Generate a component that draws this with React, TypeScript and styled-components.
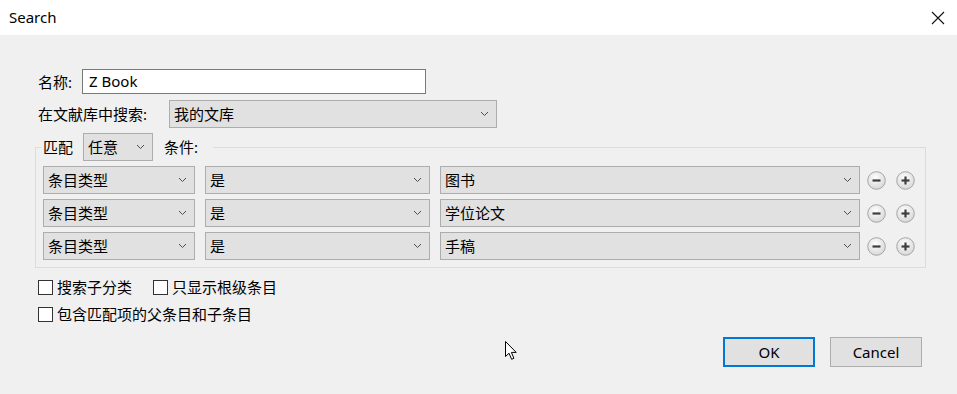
import React from 'react';
import styled, { createGlobalStyle } from 'styled-components';

const GlobalStyle = createGlobalStyle`
  html, body {
    margin: 0;
    padding: 0;
    background: #f0f0f0;
  }
  body {
    font-family: 'Segoe UI', 'Noto Sans', 'Noto Sans CJK SC', sans-serif;
    font-size: 15px;
    color: #000;
  }
`;

const CONDITIONS = [
  { field: '条目类型', op: '是', value: '图书' },
  { field: '条目类型', op: '是', value: '学位论文' },
  { field: '条目类型', op: '是', value: '手稿' },
];

function Chevron() {
  return (
    <StChevron width="9" height="6" viewBox="0 0 9 6">
      <path d="M1 1 L4.5 4.5 L8 1" fill="none" stroke="#4d4d4d" strokeWidth="1" />
    </StChevron>
  );
}

function Select({ text, width, height = 28 }: { text: string; width: number; height?: number }) {
  return (
    <StSelect $width={width} $height={height}>
      <span>{text}</span>
      <Chevron />
    </StSelect>
  );
}

function RoundButton({ kind }: { kind: 'minus' | 'plus' }) {
  const id = `grad-${kind}`;
  return (
    <StRound width="19" height="19" viewBox="0 0 19 19">
      <defs>
        <radialGradient id={id} cx="45%" cy="35%" r="70%">
          <stop offset="0%" stopColor="#ffffff" />
          <stop offset="100%" stopColor="#d4d4d4" />
        </radialGradient>
      </defs>
      <circle cx="9.5" cy="9.5" r="8.8" fill={`url(#${id})`} stroke="#a6a6a6" strokeWidth="1" />
      <path d="M5.5 9.5 H13.5" stroke="#3e3e3e" strokeWidth="2.2" />
      {kind === 'plus' && <path d="M9.5 5.5 V13.5" stroke="#3e3e3e" strokeWidth="2.2" />}
    </StRound>
  );
}

function Checkbox({ label }: { label: string }) {
  return (
    <StCheck>
      <StBox />
      <span>{label}</span>
    </StCheck>
  );
}

export default function App() {
  return (
    <StWindow>
      <GlobalStyle />
      <StTitleBar>
        <StTitle>Search</StTitle>
        <StClose width="14" height="14" viewBox="0 0 14 14">
          <path d="M1 1 L13 13 M13 1 L1 13" stroke="#111" strokeWidth="1.1" />
        </StClose>
      </StTitleBar>

      <StBody>
        <StFieldRow>
          <StLabel $width={44}>名称:</StLabel>
          <StInput>Z Book</StInput>
        </StFieldRow>
        <StFieldRow $gap={6}>
          <StLabel $width={131}>在文献库中搜索:</StLabel>
          <Select text="我的文库" width={328} />
        </StFieldRow>

        <StFieldset>
          <StLegend>
            <span>匹配</span>
            <Select text="任意" width={70} />
            <span>条件:</span>
          </StLegend>
          <StConditions>
            {CONDITIONS.map((c, i) => (
              <StCondRow key={i}>
                <Select text={c.field} width={152} />
                <Select text={c.op} width={225} />
                <Select text={c.value} width={420} />
                <StRoundGroup>
                  <RoundButton kind="minus" />
                  <RoundButton kind="plus" />
                </StRoundGroup>
              </StCondRow>
            ))}
          </StConditions>
        </StFieldset>

        <StChecks>
          <StCheckRow>
            <Checkbox label="搜索子分类" />
            <Checkbox label="只显示根级条目" />
          </StCheckRow>
          <StCheckRow>
            <Checkbox label="包含匹配项的父条目和子条目" />
          </StCheckRow>
        </StChecks>

        <StButtons>
          <StButton $primary>OK</StButton>
          <StButton>Cancel</StButton>
        </StButtons>
      </StBody>

      <StCursor width="13" height="20" viewBox="0 0 13 20">
        <path d="M0.5 0.5 L0.5 15.5 L4 12.2 L6.6 18.3 L8.9 17.3 L6.4 11.4 L11.2 11.4 Z" fill="#fff" stroke="#000" strokeWidth="1" strokeLinejoin="round" />
      </StCursor>
    </StWindow>
  );
}

const StWindow = styled.div`
  position: relative;
  width: 957px;
  height: 394px;
  background: #f0f0f0;
  overflow: hidden;
`;

const StTitleBar = styled.div`
  height: 35px;
  background: #fff;
  display: flex;
  align-items: center;
  justify-content: space-between;
  padding: 0 12px 0 9px;
  box-sizing: border-box;
`;

const StTitle = styled.div`
  font-size: 15px;
  line-height: 20px;
  margin-top: -1px;
`;

const StClose = styled.svg`
  display: block;
`;

const StBody = styled.div`
  display: flex;
  flex-direction: column;
  padding: 34px 31px 0 35px;
`;

const StFieldRow = styled.div<{ $gap?: number }>`
  display: flex;
  align-items: center;
  padding-left: 3px;
  margin-top: ${(p) => p.$gap ?? 0}px;
`;

const StLabel = styled.div<{ $width: number }>`
  width: ${(p) => p.$width}px;
  flex: none;
  line-height: 20px;
`;

const StInput = styled.div`
  width: 344px;
  height: 25px;
  box-sizing: border-box;
  border: 1px solid #7a7a7a;
  background: #fff;
  padding: 0 6px;
  line-height: 22px;
  font-size: 15px;
`;

const StSelect = styled.div<{ $width: number; $height: number }>`
  position: relative;
  flex: none;
  width: ${(p) => p.$width}px;
  height: ${(p) => p.$height}px;
  box-sizing: border-box;
  border: 1px solid #adadad;
  background: #e1e1e1;
  display: flex;
  align-items: center;
  padding-left: 4px;
  line-height: 20px;
`;

const StChevron = styled.svg`
  position: absolute;
  right: 7px;
  top: 10px;
`;

const StFieldset = styled.fieldset`
  margin: 5px 0 0;
  padding: 5px 10px 7px 5px;
  border: 1px solid #dcdcdc;
  min-width: 0;
`;

const StLegend = styled.legend`
  display: flex;
  align-items: center;
  gap: 10px;
  padding: 0 15px 0 2px;
  line-height: 20px;

  & > span:last-child {
    margin-left: 1px;
  }
`;

const StConditions = styled.div`
  display: flex;
  flex-direction: column;
  gap: 5px;
  padding-left: 2px;
`;

const StCondRow = styled.div`
  display: flex;
  align-items: center;
  gap: 10px;
`;

const StRoundGroup = styled.div`
  display: flex;
  align-items: center;
  gap: 10px;
  margin-left: -3px;
`;

const StRound = styled.svg`
  display: block;
`;

const StChecks = styled.div`
  display: flex;
  flex-direction: column;
  gap: 7px;
  margin-top: 9px;
  padding-left: 3px;
`;

const StCheckRow = styled.div`
  display: flex;
  align-items: center;
  gap: 21px;
  height: 20px;
`;

const StCheck = styled.label`
  display: flex;
  align-items: center;
  gap: 4px;
  line-height: 20px;
`;

const StBox = styled.span`
  display: block;
  width: 15px;
  height: 15px;
  box-sizing: border-box;
  border: 1px solid #333;
  background: #fff;
`;

const StButtons = styled.div`
  display: flex;
  justify-content: flex-end;
  gap: 15px;
  margin-top: 13px;
  padding-right: 4px;
`;

const StButton = styled.div<{ $primary?: boolean }>`
  width: 92px;
  height: 30px;
  box-sizing: border-box;
  border: ${(p) => (p.$primary ? '2px solid #0078d7' : '1px solid #adadad')};
  background: #e1e1e1;
  display: flex;
  align-items: center;
  justify-content: center;
  font-size: 15px;
`;

const StCursor = styled.svg`
  position: absolute;
  left: 505px;
  top: 341px;
`;
